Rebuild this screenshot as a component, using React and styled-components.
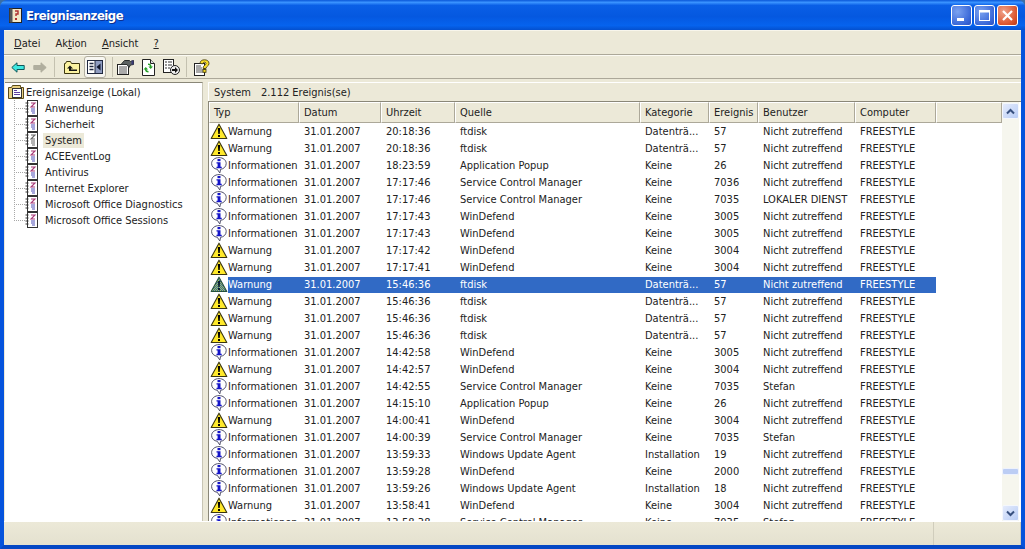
import React from 'react';
import styled, { createGlobalStyle } from 'styled-components';

const UI_FONT = '"DejaVu Sans Condensed", "Liberation Sans", Arial, sans-serif';

const GlobalStyle = createGlobalStyle`
	html, body {
		margin: 0;
		padding: 0;
		overflow: hidden;
	}
	body {
		font-family: ${UI_FONT};
		font-size: 11px;
		color: #222;
	}
`;

const COLUMNS = [
	{ label: 'Typ', width: 90 },
	{ label: 'Datum', width: 82 },
	{ label: 'Uhrzeit', width: 74 },
	{ label: 'Quelle', width: 185 },
	{ label: 'Kategorie', width: 69 },
	{ label: 'Ereignis', width: 49 },
	{ label: 'Benutzer', width: 97 },
	{ label: 'Computer', width: 81 },
];

const W = 'Warnung';
const I = 'Informationen';
const EVENTS = [
	[W, '20:18:36', 'ftdisk', 'Datenträ...', '57', 'Nicht zutreffend'],
	[W, '20:18:36', 'ftdisk', 'Datenträ...', '57', 'Nicht zutreffend'],
	[I, '18:23:59', 'Application Popup', 'Keine', '26', 'Nicht zutreffend'],
	[I, '17:17:46', 'Service Control Manager', 'Keine', '7036', 'Nicht zutreffend'],
	[I, '17:17:46', 'Service Control Manager', 'Keine', '7035', 'LOKALER DIENST'],
	[I, '17:17:43', 'WinDefend', 'Keine', '3005', 'Nicht zutreffend'],
	[I, '17:17:43', 'WinDefend', 'Keine', '3005', 'Nicht zutreffend'],
	[W, '17:17:42', 'WinDefend', 'Keine', '3004', 'Nicht zutreffend'],
	[W, '17:17:41', 'WinDefend', 'Keine', '3004', 'Nicht zutreffend'],
	[W, '15:46:36', 'ftdisk', 'Datenträ...', '57', 'Nicht zutreffend'],
	[W, '15:46:36', 'ftdisk', 'Datenträ...', '57', 'Nicht zutreffend'],
	[W, '15:46:36', 'ftdisk', 'Datenträ...', '57', 'Nicht zutreffend'],
	[W, '15:46:36', 'ftdisk', 'Datenträ...', '57', 'Nicht zutreffend'],
	[I, '14:42:58', 'WinDefend', 'Keine', '3005', 'Nicht zutreffend'],
	[W, '14:42:57', 'WinDefend', 'Keine', '3004', 'Nicht zutreffend'],
	[I, '14:42:55', 'Service Control Manager', 'Keine', '7035', 'Stefan'],
	[I, '14:15:10', 'Application Popup', 'Keine', '26', 'Nicht zutreffend'],
	[W, '14:00:41', 'WinDefend', 'Keine', '3004', 'Nicht zutreffend'],
	[I, '14:00:39', 'Service Control Manager', 'Keine', '7035', 'Stefan'],
	[I, '13:59:33', 'Windows Update Agent', 'Installation', '19', 'Nicht zutreffend'],
	[I, '13:59:28', 'WinDefend', 'Keine', '2000', 'Nicht zutreffend'],
	[I, '13:59:26', 'Windows Update Agent', 'Installation', '18', 'Nicht zutreffend'],
	[W, '13:58:41', 'WinDefend', 'Keine', '3004', 'Nicht zutreffend'],
	[I, '13:58:38', 'Service Control Manager', 'Keine', '7035', 'Stefan'],
];

const LOGS = [
	'Anwendung',
	'Sicherheit',
	'System',
	'ACEEventLog',
	'Antivirus',
	'Internet Explorer',
	'Microsoft Office Diagnostics',
	'Microsoft Office Sessions',
];

const Desktop = styled.div`
	width: 1025px;
	height: 549px;
	background: #3a6ea5;
	display: flex;
	flex-direction: column;
	overflow: hidden;
`;

const TitleBar = styled.div`
	height: 30px;
	flex: none;
	display: flex;
	align-items: center;
	padding: 0 7px 0 8px;
	border-radius: 7px 7px 0 0;
	background: linear-gradient(180deg, #0a57d8 0%, #3a93ff 8%, #0a5fe6 18%, #0558e0 55%, #0663ee 85%, #0450cf 100%);
`;

const TitleText = styled.div`
	flex: 1;
	margin-left: 3px;
	font: bold 13px ${UI_FONT};
	letter-spacing: -0.5px;
	color: #fff;
	text-shadow: 1px 1px 0 #0b2f8f;
`;

const CaptionButton = styled.div`
	width: 21px;
	height: 21px;
	margin-left: 2px;
	box-sizing: border-box;
	border: 1px solid #fff;
	border-radius: 3px;
	background: ${(props) => (props.close
		? 'radial-gradient(circle at 30% 30%, #f0a28a, #d9532c 70%, #b83a18)'
		: 'radial-gradient(circle at 30% 30%, #7ba2f0, #3a68d8 70%, #2a50c0)')};
	display: flex;
	align-items: center;
	justify-content: center;
`;

const Frame = styled.div`
	flex: 1;
	min-height: 0;
	display: flex;
	flex-direction: column;
	border-left: 4px solid #0553dc;
	border-right: 4px solid #0553dc;
	border-bottom: 4px solid #0447c4;
	background: #ece9d8;
`;

const MenuBar = styled.div`
	height: 25px;
	flex: none;
	display: flex;
	align-items: center;
	padding: 1px 0 0 10px;
	gap: 15px;
	border-top: 1px solid #f8f6ec;
	border-bottom: 1px solid #aca899;
	box-sizing: border-box;
`;

const MenuItem = styled.span`
	u { text-decoration: underline; }
`;

const ToolBar = styled.div`
	height: 24px;
	flex: none;
	display: flex;
	align-items: center;
	padding-left: 3px;
	border-top: 1px solid #fbfaf3;
	border-bottom: 1px solid #aca899;
	box-sizing: border-box;
`;

const ToolButton = styled.div`
	width: ${(props) => props.width || 22}px;
	height: 22px;
	margin-right: ${(props) => props.gap || 0}px;
	box-sizing: border-box;
	flex: none;
	display: flex;
	align-items: center;
	justify-content: center;
	border-radius: 3px;
	${(props) => props.active && 'background: #f8f7f2; border: 1px solid #b3afa0;'}
`;

const ToolSep = styled.div`
	width: 1px;
	height: 20px;
	flex: none;
	background: #c4c1b0;
	margin: 0 ${(props) => props.after}px 0 ${(props) => props.before}px;
`;

const Panes = styled.div`
	flex: 1;
	min-height: 0;
	display: flex;
	padding-top: 3px;
`;

const TreePane = styled.div`
	width: 198px;
	flex: none;
	background: #fff;
	border-top: 1px solid #8a8778;
	border-right: 1px solid #c8c5b4;
	box-sizing: border-box;
	margin-left: 1px;
	padding-top: 1px;
`;

const TreeRoot = styled.div`
	height: 16px;
	display: flex;
	align-items: center;
	gap: 1px;
	padding-left: 2px;
`;

const TreeList = styled.div`
	position: relative;
	&::before {
		content: '';
		position: absolute;
		left: 9px;
		top: 0;
		height: 121px;
		border-left: 1px dotted #a8a8a8;
	}
`;

const TreeRow = styled.div`
	height: 16px;
	display: flex;
	align-items: center;
	padding-left: 9px;
`;

const TreeDots = styled.span`
	width: 11px;
	height: 0;
	border-top: 1px dotted #a8a8a8;
`;

const TreeLabel = styled.span`
	margin-left: 4px;
	padding: 0 2px;
	line-height: 15px;
	background: ${(props) => (props.selected ? '#ece9d8' : 'transparent')};
`;

const ListPane = styled.div`
	flex: 1;
	min-width: 0;
	display: flex;
	flex-direction: column;
	margin-left: 5px;
`;

const ListCaption = styled.div`
	height: 19px;
	flex: none;
	display: flex;
	align-items: center;
	gap: 10px;
	padding: 1px 0 0 5px;
	box-sizing: border-box;
	border-top: 1px solid #fff;
	border-left: 1px solid #fff;
`;

const ListBody = styled.div`
	flex: 1;
	min-height: 0;
	display: flex;
	border-top: 1px solid #8a8778;
	border-left: 1px solid #8a8778;
	background: #fff;
`;

const ListMain = styled.div`
	flex: 1;
	min-width: 0;
	overflow: hidden;
`;

const HeaderRow = styled.div`
	height: 21px;
	display: flex;
	background: #ece9d8;
`;

const HeaderCell = styled.div`
	width: ${(props) => props.width}px;
	flex: ${(props) => (props.fill ? '1' : 'none')};
	box-sizing: border-box;
	padding: 3px 0 0 4px;
	border-top: 1px solid #fff;
	border-left: 1px solid #fff;
	border-right: 1px solid #aca899;
	border-bottom: 1px solid #aca899;
	white-space: nowrap;
	overflow: hidden;
`;

const Row = styled.div`
	height: 17px;
	display: flex;
	align-items: center;
	width: 727px;
`;

const TypeCell = styled.div`
	width: 90px;
	flex: none;
	height: 17px;
	display: flex;
	align-items: center;
`;

const TypeIcon = styled.svg`
	width: 18px;
	height: 17px;
	flex: none;
	margin-left: 1px;
`;

const TypeText = styled.span`
	flex: 1;
	line-height: 16px;
	white-space: nowrap;
	color: ${(props) => (props.selected ? '#fff' : 'inherit')};
	background: ${(props) => (props.selected ? '#316ac5' : 'transparent')};
`;

const Cell = styled.div`
	width: ${(props) => props.width}px;
	flex: none;
	height: 16px;
	line-height: 16px;
	padding-left: 5px;
	box-sizing: border-box;
	white-space: nowrap;
	overflow: hidden;
	color: ${(props) => (props.selected ? '#fff' : 'inherit')};
	background: ${(props) => (props.selected ? '#316ac5' : 'transparent')};
`;

const ScrollBar = styled.div`
	width: 17px;
	flex: none;
	margin-right: 2px;
	background: #f6f6ee;
	display: flex;
	flex-direction: column;
	justify-content: space-between;
	position: relative;
`;

const ScrollButton = styled.div`
	height: 16px;
	margin-top: 1px;
	border-radius: 2px;
	border: 1px solid #f4f7fd;
	box-sizing: border-box;
	background: linear-gradient(135deg, #e4ebfc, #b9cdf6);
	display: flex;
	align-items: center;
	justify-content: center;
`;

const ScrollThumb = styled.div`
	position: absolute;
	left: 0;
	right: 0;
	top: 366px;
	height: 7px;
	border-radius: 2px;
	border: 1px solid #eef2fd;
	box-sizing: border-box;
	background: #bccdf4;
`;

const StatusBar = styled.div`
	height: 24px;
	flex: none;
	display: flex;
	background: linear-gradient(180deg, #ece9d8, #e4e1cf);
	border-top: 1px solid #fff;
	box-sizing: border-box;
`;

const StatusCell = styled.div`
	width: ${(props) => props.width}px;
	flex: ${(props) => (props.fill ? '1' : 'none')};
	border-right: 1px solid #d0cdbc;
`;

const WarningIcon = ({ selected }) => (
	<TypeIcon viewBox="0 0 18 17">
		<defs>
			<pattern id="dither" width="2" height="2" patternUnits="userSpaceOnUse">
				<rect width="2" height="2" fill="#3a6a9a" />
				<rect width="1" height="1" fill="#a0c060" />
				<rect x="1" y="1" width="1" height="1" fill="#a0c060" />
			</pattern>
		</defs>
		<path
			d="M9 1.2 16.8 15.5H1.200z"
			fill={selected ? 'url(#dither)' : '#ffe92a'}
			stroke={selected ? '#26503c' : '#3a3510'}
			strokeWidth="1.100"
			strokeLinejoin="round"
		/>
		<path d="M7.800 5h2.400l-.5 6H8.300z" fill={selected ? '#0c2030' : '#000'} />
		<rect x="8" y="12" width="2" height="2" fill={selected ? '#0c2030' : '#000'} />
	</TypeIcon>
);

const InfoIcon = () => (
	<TypeIcon viewBox="0 0 18 17">
		<path
			d="M9 .6c4.200 0 7.200 2.600 7.200 5.900 0 3.200-2.600 5.500-5.600 5.800L9.800 16 7.300 12.300C3.900 11.900 1.600 9.600 1.600 6.500 1.600 3.200 4.800.6 9 .6z"
			fill="#fff"
			stroke="#50506a"
			strokeWidth="1"
		/>
		<rect x="7.500" y="2" width="3" height="2.200" fill="#1414c8" />
		<path d="M6.500 5.200h4v4.600h1.200v1.400H6.500V9.800h1.100V6.600H6.500z" fill="#1414c8" />
	</TypeIcon>
);

const LogIcon = ({ selected }) => (
	<svg width="14" height="16" viewBox="0 0 14 16" style={{ flex: 'none' }}>
		<rect x="2.500" y="0.500" width="10" height="15" fill="#fff" stroke="#333" />
		<path d="M.5 3h3M.5 6h3M.5 9h3M.5 12h3" stroke="#333" />
		<path d="M6 3h4L6 7h4" fill="none" stroke={selected ? '#666' : '#a83a78'} strokeWidth="1.100" />
		<path d="M6 9h4M6 11h4M7 13h3" stroke={selected ? '#666' : '#5050b8'} strokeWidth="1" />
	</svg>
);

const RootIcon = () => (
	<svg width="18" height="16" viewBox="0 0 18 16" style={{ flex: 'none' }}>
		<path d="M1.500 3.500h3l1-2h8v2h3v11h-15z" fill="#e8cf80" stroke="#5a4a18" />
		<rect x="5.500" y="4.500" width="9" height="9" fill="#fff" stroke="#333" />
		<path d="M7 6.500h3M7 8.500h6M7 10.500h6" stroke="#6040a0" />
	</svg>
);

const ArrowIcon = ({ left, color, edge }) => (
	<svg width="14" height="11" viewBox="0 0 14 11">
		<path
			d={left ? 'M6 .8 .8 5.500 6 10.200V7.500h7.200v-4H6z' : 'M8 .8l5.200 4.700L8 10.200V7.500H.8v-4H8z'}
			fill={color}
			stroke={edge}
		/>
	</svg>
);

const UpFolderIcon = () => (
	<svg width="16" height="15" viewBox="0 0 16 15">
		<path d="M.5 3.500h1l1-2h4l1 2h8v10H.5z" fill="#fbf2a0" stroke="#3c3610" />
		<path d="M6 5.500 3 8.500h2v2.500h8V9.500H7V8.500h2z" fill="#111" />
	</svg>
);

const PaneIcon = () => (
	<svg width="16" height="14" viewBox="0 0 16 14">
		<rect x=".5" y=".5" width="15" height="13" fill="#fff" stroke="#20283f" />
		<rect x="8" y="1" width="7" height="12" fill="#8f9cc0" />
		<path d="M8 1v12" stroke="#20283f" />
		<path d="M2.500 3.500h4M2.500 6.500h4M2.500 9.500h4" stroke="#20283f" strokeWidth="1.400" />
		<path d="M13.500 3.500v7L9.500 7z" fill="#10162c" />
	</svg>
);

const PropsIcon = () => (
	<svg width="17" height="16" viewBox="0 0 17 16">
		<rect x=".5" y="5.500" width="11" height="10" fill="#fff" stroke="#222" />
		<path d="M2 8h8M2 10h8M2 12h8M2 14h8" stroke="#555" />
		<path d="M4 5.500 7.500 1.500h5l1 1 3-1v4l-3 .5-1.500 2.500-2-3z" fill="#5c6262" stroke="#2a2e2e" />
		<rect x="14.500" y="1.500" width="2" height="4" fill="#3a3a78" />
	</svg>
);

const RefreshIcon = () => (
	<svg width="13" height="17" viewBox="0 0 13 17">
		<path d="M.5.500h8l4 4v12H.5z" fill="#fff" stroke="#222" />
		<path d="M8.500.500v4h4" fill="#ddd" stroke="#222" />
		<path d="M6 4.500c2.200 0 3.500 1.200 3.500 3h1.500l-2.300 2.400-2.300-2.400H8c0-.9-.8-1.400-2-1.400z" fill="#25a025" />
		<path d="M6.500 13.500c-2.200 0-3.500-1.200-3.500-3H1.500l2.300-2.400 2.300 2.400H4.500c0 .9.800 1.400 2 1.400z" fill="#25a025" />
	</svg>
);

const ExportIcon = () => (
	<svg width="17" height="16" viewBox="0 0 17 16">
		<rect x=".5" y=".5" width="10" height="13" fill="#fff" stroke="#222" />
		<path d="M2 3h2M5 3h4M2 6h2M5 6h4M2 9h2M5 9h2" stroke="#333" strokeWidth="1.200" />
		<circle cx="12" cy="11" r="4.500" fill="#eee" stroke="#222" />
		<path d="M9 10h3V8l3 3-3 3v-2H9z" fill="#111" />
	</svg>
);

const HelpIcon = () => (
	<svg width="16" height="17" viewBox="0 0 16 17">
		<rect x=".5" y="4.500" width="10" height="12" fill="#fff" stroke="#222" />
		<path d="M2 7h5M2 9h6M2 11h7M2 13h7" stroke="#555" />
		<path
			d="M6 4.500C6 2 8 .8 10.500.8s4.500 1.200 4.500 3.700c0 2.800-3 2.600-3 5H9c0-3.300 3-3.300 3-5 0-.8-.7-1.300-1.500-1.300S9 3.700 9 4.800z"
			fill="#f8dc2a"
			stroke="#3a3206"
			strokeWidth=".8"
		/>
		<rect x="9" y="10.500" width="3" height="2.800" fill="#f8dc2a" stroke="#3a3206" strokeWidth=".8" />
	</svg>
);

const Chevron = ({ down }) => (
	<svg width="9" height="7" viewBox="0 0 9 7">
		<path d={down ? 'M1 1.500 4.500 5 8 1.500' : 'M1 5.500 4.500 2 8 5.500'} fill="none" stroke="#37507f" strokeWidth="2" />
	</svg>
);

const App = () => (
	<Desktop>
		<GlobalStyle />
		<TitleBar>
			<svg width="15" height="17" viewBox="0 0 15 17">
				<rect x="1.500" y="1.500" width="12" height="14" fill="#f2e8c8" stroke="#222" />
				<rect x="1.500" y="1.500" width="3" height="14" fill="#555" />
				<path d="M7 4h3v3H8v2" fill="none" stroke="#b03030" strokeWidth="1.400" />
				<rect x="7" y="11" width="2" height="2" fill="#b03030" />
			</svg>
			<TitleText>Ereignisanzeige</TitleText>
			<CaptionButton>
				<svg width="13" height="13" viewBox="0 0 13 13"><rect x="2" y="9" width="7" height="3" fill="#fff" /></svg>
			</CaptionButton>
			<CaptionButton>
				<svg width="13" height="13" viewBox="0 0 13 13"><rect x="1.500" y="2.500" width="10" height="9" fill="none" stroke="#fff" /><rect x="1" y="1" width="11" height="2.500" fill="#fff" /></svg>
			</CaptionButton>
			<CaptionButton close="true">
				<svg width="13" height="13" viewBox="0 0 13 13"><path d="M2 2l9 9M11 2l-9 9" stroke="#fff" strokeWidth="2.200" /></svg>
			</CaptionButton>
		</TitleBar>
		<Frame>
			<MenuBar>
				<MenuItem><u>D</u>atei</MenuItem>
				<MenuItem>Ak<u>t</u>ion</MenuItem>
				<MenuItem><u>A</u>nsicht</MenuItem>
				<MenuItem><u>?</u></MenuItem>
			</MenuBar>
			<ToolBar>
				<ToolButton><ArrowIcon left color="#3ce8e0" edge="#10565a" /></ToolButton>
				<ToolButton><ArrowIcon color="#b0ae9e" edge="#b0ae9e" /></ToolButton>
				<ToolSep before={3} after={6} />
				<ToolButton gap={1}><UpFolderIcon /></ToolButton>
				<ToolButton active="true"><PaneIcon /></ToolButton>
				<ToolSep before={6} after={1} />
				<ToolButton><PropsIcon /></ToolButton>
				<ToolButton width={24}><RefreshIcon /></ToolButton>
				<ToolButton><ExportIcon /></ToolButton>
				<ToolSep before={4} after={4} />
				<ToolButton><HelpIcon /></ToolButton>
			</ToolBar>
			<Panes>
				<TreePane>
					<TreeRoot><RootIcon />Ereignisanzeige (Lokal)</TreeRoot>
					<TreeList>
						{LOGS.map((log) => (
							<TreeRow key={log}>
								<TreeDots />
								<LogIcon selected={log === 'System'} />
								<TreeLabel selected={log === 'System'}>{log}</TreeLabel>
							</TreeRow>
						))}
					</TreeList>
				</TreePane>
				<ListPane>
					<ListCaption><span>System</span><span>2.112 Ereignis(se)</span></ListCaption>
					<ListBody>
						<ListMain>
							<HeaderRow>
								{COLUMNS.map((col) => (
									<HeaderCell key={col.label} width={col.width}>{col.label}</HeaderCell>
								))}
								<HeaderCell fill="true" />
							</HeaderRow>
							{EVENTS.map((ev, i) => {
								const selected = i === 9;
								return (
									<Row key={i}>
										<TypeCell>
											{ev[0] === W ? <WarningIcon selected={selected} /> : <InfoIcon />}
											<TypeText selected={selected}>{ev[0]}</TypeText>
										</TypeCell>
										<Cell width={82} selected={selected}>31.01.2007</Cell>
										<Cell width={74} selected={selected}>{ev[1]}</Cell>
										<Cell width={185} selected={selected}>{ev[2]}</Cell>
										<Cell width={69} selected={selected}>{ev[3]}</Cell>
										<Cell width={49} selected={selected}>{ev[4]}</Cell>
										<Cell width={97} selected={selected}>{ev[5]}</Cell>
										<Cell width={81} selected={selected}>FREESTYLE</Cell>
									</Row>
								);
							})}
						</ListMain>
						<ScrollBar>
							<ScrollButton><Chevron /></ScrollButton>
							<ScrollThumb />
							<ScrollButton><Chevron down /></ScrollButton>
						</ScrollBar>
					</ListBody>
				</ListPane>
			</Panes>
			<StatusBar>
				<StatusCell width={929} />
				<StatusCell fill="true" />
			</StatusBar>
		</Frame>
	</Desktop>
);

export default App;
